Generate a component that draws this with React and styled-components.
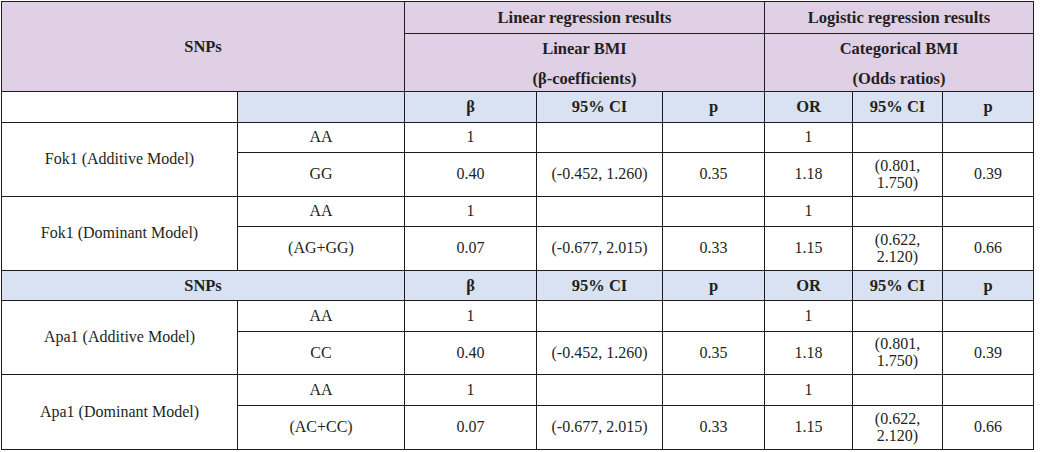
import styled, { createGlobalStyle } from "styled-components";

const GlobalStyle = createGlobalStyle`
  html, body {
    margin: 0;
    padding: 0;
    background: #ffffff;
  }
`;

const Table = styled.table`
  margin: 1px 0 0 1px;
  width: 1033px;
  table-layout: fixed;
  border-collapse: collapse;
  font-family: "Liberation Serif", "Times New Roman", serif;
  font-size: 16px;
  color: #231f20;

  & td,
  & th {
    border: 1px solid #1f1b1d;
    padding: 0 8px;
    text-align: center;
    vertical-align: middle;
    line-height: 1.05;
  }
`;

const Row = styled.tr`
  height: ${(p) => p.$h}px;
`;

const Head = styled.th`
  font-weight: 700;
  font-size: 16.5px;
  background: ${(p) => (p.$tone === "blue" ? "#d9e2f3" : "#dfd0e5")};
`;

const Cell = styled.td`
  font-weight: 400;
  background: #ffffff;
`;

const Stack = styled.div`
  display: flex;
  flex-direction: column;
  align-items: center;
  gap: 12px;
  padding-top: 2px;
`;

const widths = [236, 167, 132, 126, 102, 88, 90, 91];

const subHeads = ["β", "95% CI", "p", "OR", "95% CI", "p"];

const groups = [
  {
    name: "Fok1 (Additive Model)",
    rows: [
      { g: "AA", h: 30, v: ["1", "", "", "1", "", ""] },
      { g: "GG", h: 44, v: ["0.40", "(-0.452, 1.260)", "0.35", "1.18", "(0.801, 1.750)", "0.39"] },
    ],
  },
  {
    name: "Fok1 (Dominant Model)",
    rows: [
      { g: "AA", h: 30, v: ["1", "", "", "1", "", ""] },
      { g: "(AG+GG)", h: 44, v: ["0.07", "(-0.677, 2.015)", "0.33", "1.15", "(0.622, 2.120)", "0.66"] },
    ],
  },
];

const groups2 = [
  {
    name: "Apa1 (Additive Model)",
    rows: [
      { g: "AA", h: 31, v: ["1", "", "", "1", "", ""] },
      { g: "CC", h: 43, v: ["0.40", "(-0.452, 1.260)", "0.35", "1.18", "(0.801, 1.750)", "0.39"] },
    ],
  },
  {
    name: "Apa1 (Dominant Model)",
    rows: [
      { g: "AA", h: 31, v: ["1", "", "", "1", "", ""] },
      { g: "(AC+CC)", h: 44, v: ["0.07", "(-0.677, 2.015)", "0.33", "1.15", "(0.622, 2.120)", "0.66"] },
    ],
  },
];

function Group({ group }) {
  return group.rows.map((r, i) => (
    <Row $h={r.h} key={i}>
      {i === 0 && <Cell rowSpan={group.rows.length}>{group.name}</Cell>}
      <Cell>{r.g}</Cell>
      {r.v.map((v, j) => (
        <Cell key={j}>{v}</Cell>
      ))}
    </Row>
  ));
}

export default function App() {
  return (
    <>
      <GlobalStyle />
      <Table>
        <colgroup>
          {widths.map((w, i) => (
            <col key={i} style={{ width: w }} />
          ))}
        </colgroup>
        <tbody>
          <Row $h={32}>
            <Head colSpan={2} rowSpan={2}>SNPs</Head>
            <Head colSpan={3}>Linear regression results</Head>
            <Head colSpan={3}>Logistic regression results</Head>
          </Row>
          <Row $h={58}>
            <Head colSpan={3}>
              <Stack>
                <span>Linear BMI</span>
                <span>(β-coefficients)</span>
              </Stack>
            </Head>
            <Head colSpan={3}>
              <Stack>
                <span>Categorical BMI</span>
                <span>(Odds ratios)</span>
              </Stack>
            </Head>
          </Row>
          <Row $h={31}>
            <Cell />
            <Head $tone="blue" />
            {subHeads.map((s, i) => (
              <Head $tone="blue" key={i}>{s}</Head>
            ))}
          </Row>
          {groups.map((g, i) => (
            <Group group={g} key={i} />
          ))}
          <Row $h={30}>
            <Head $tone="blue" colSpan={2}>SNPs</Head>
            {subHeads.map((s, i) => (
              <Head $tone="blue" key={i}>{s}</Head>
            ))}
          </Row>
          {groups2.map((g, i) => (
            <Group group={g} key={i} />
          ))}
        </tbody>
      </Table>
    </>
  );
}
